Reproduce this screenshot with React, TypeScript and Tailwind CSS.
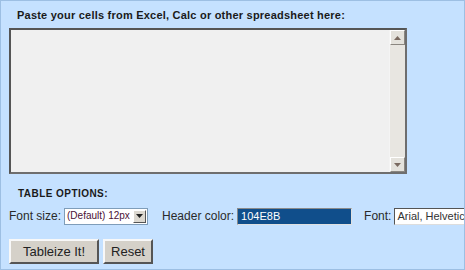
import React from "react";

function ScrollButton({ dir }: { dir: "up" | "down" }) {
  return (
    <div className="w-[15px] h-[15px] bg-[#e4e2dc] border border-t-white border-l-white border-r-[#8a8680] border-b-[#8a8680] flex items-center justify-center">
      <svg width="7" height="4" viewBox="0 0 7 4">
        {dir === "up" ? (
          <polygon points="3.5,0 7,4 0,4" fill="#7a6a60" />
        ) : (
          <polygon points="0,0 7,0 3.5,4" fill="#7a6a60" />
        )}
      </svg>
    </div>
  );
}

export default function App() {
  return (
    <div
      className="w-[465px] h-[270px] bg-[#c5e1ff] border border-[#9dbfe3] overflow-hidden text-[#222]"
      style={{ fontFamily: '"Liberation Sans", Arial, sans-serif' }}
    >
      <div className="pl-[16px] pt-[7px] text-[11px] font-bold leading-[14px] tracking-[0.22px] text-[#1a1a1a]">
        Paste your cells from Excel, Calc or other spreadsheet here:
      </div>

      <div className="ml-[8px] mt-[6px] w-[398px] h-[146px] border-2 border-t-[#555] border-l-[#555] border-r-[#6e6e6e] border-b-[#6e6e6e] bg-[#f0f0f0] flex justify-end">
        <div className="w-[16px] h-full bg-[#e8e6e1] flex flex-col justify-between border-l border-[#f4f4f4]">
          <ScrollButton dir="up" />
          <ScrollButton dir="down" />
        </div>
      </div>

      <div className="pl-[17px] mt-[14px] text-[10px] font-bold leading-[12px] tracking-[0.45px] text-[#1a1a1a]">
        TABLE OPTIONS:
      </div>

      <div className="flex items-center pl-[8px] mt-[7px] text-[12px] text-[#2a2a2a] whitespace-nowrap">
        <span className="shrink-0">Font size:</span>
        <div className="shrink-0 ml-[3px] w-[84px] h-[17px] bg-white border border-[#7f9db9] flex items-center">
          <span className="flex-1 pl-[2px] text-[10px] text-[#4a1035] leading-none">(Default) 12px</span>
          <div className="w-[13px] h-[13px] mr-px bg-[#dcd8d0] border border-t-white border-l-white border-r-[#555] border-b-[#555] flex items-center justify-center">
            <svg width="7" height="4" viewBox="0 0 7 4">
              <polygon points="0,0 7,0 3.5,4" fill="#222" />
            </svg>
          </div>
        </div>
        <span className="shrink-0 ml-[14px]">Header color:</span>
        <div className="shrink-0 ml-[3px] w-[115px] h-[17px] bg-[#104e8b] border border-t-[#8a8a8a] border-l-[#8a8a8a] border-r-[#e0e0e0] border-b-[#e0e0e0] flex items-center pl-[3px] text-[11px] text-white leading-none">
          104E8B
        </div>
        <span className="shrink-0 ml-[12px]">Font:</span>
        <div className="shrink-0 ml-[3px] w-[90px] h-[17px] bg-white border border-t-[#555] border-l-[#555] border-r-[#ddd] border-b-[#ddd] flex items-center pl-[2px] text-[11px] text-[#333] leading-none overflow-hidden">
          Arial, Helvetica, sans-serif
        </div>
      </div>

      <div className="flex pl-[8px] mt-[14px] gap-[4px] text-[13px] text-[#222]">
        <button className="w-[90px] h-[25px] bg-[#d5d1c9] border-2 border-t-[#f8f8f8] border-l-[#f8f8f8] border-r-[#555] border-b-[#555] leading-none">
          Tableize It!
        </button>
        <button className="w-[50px] h-[25px] bg-[#d5d1c9] border-2 border-t-[#f8f8f8] border-l-[#f8f8f8] border-r-[#555] border-b-[#555] leading-none">
          Reset
        </button>
      </div>
    </div>
  );
}
